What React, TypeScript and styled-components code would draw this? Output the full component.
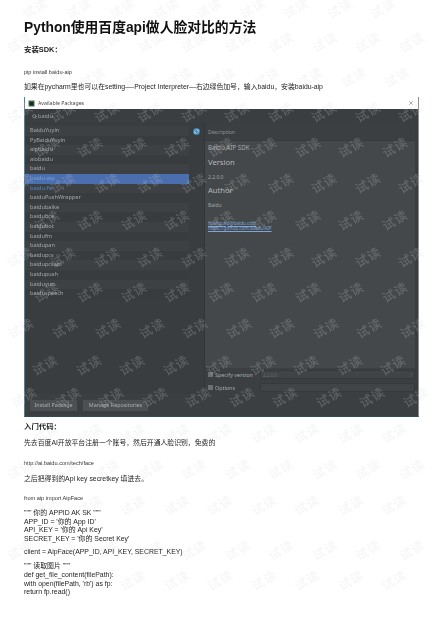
import React from "react";
import styled, { createGlobalStyle } from "styled-components";
import { Search, X, RefreshCw, ChevronDown } from "lucide-react";

const Global = createGlobalStyle`
  html, body { margin: 0; padding: 0; background: #fff; }
  body { width: 440px; height: 620px; overflow: hidden; font-family: "Liberation Sans", "Noto Sans CJK SC", sans-serif; color: #1c1c1c; }
`;

const Page = styled.div`
  position: relative;
  width: 440px;
  height: 620px;
  overflow: hidden;
  padding: 19px 21px 0 24px;
  box-sizing: border-box;
  filter: blur(0.35px);
`;
const Title = styled.h1`
  margin: 0;
  font-size: 13.8px;
  line-height: 17px;
  font-weight: 700;
  color: #111;
  white-space: nowrap;
`;
const Heading = styled.div<{ $top: number }>`
  margin-top: ${(p) => p.$top}px;
  font-size: 7.4px;
  line-height: 9px;
  font-weight: 700;
  white-space: nowrap;
`;
const Small = styled.div<{ $top: number }>`
  margin-top: ${(p) => p.$top}px;
  font-size: 5.6px;
  line-height: 7px;
  color: #333;
  white-space: nowrap;
`;
const Body = styled.div<{ $top: number }>`
  margin-top: ${(p) => p.$top}px;
  font-size: 6.85px;
  line-height: 9px;
  color: #222;
  white-space: nowrap;
`;
const Code = styled.div<{ $top: number }>`
  margin-top: ${(p) => p.$top}px;
  font-size: 6.9px;
  line-height: 8.6px;
  color: #222;
  white-space: pre;
`;

const Dialog = styled.div`
  margin-top: 6px;
  width: 395px;
  height: 320px;
  display: flex;
  flex-direction: column;
  background: #3c3f41;
  border-left: 1px solid #4f7f9f;
  border-right: 1px solid #8a8d8f;
  border-bottom: 1px solid #2f4a5c;
  box-sizing: border-box;
  font-family: "Noto Sans", "Liberation Sans", sans-serif;
`;
const TitleBar = styled.div`
  height: 12px;
  flex: none;
  display: flex;
  align-items: center;
  gap: 3px;
  padding: 0 4px 0 3px;
  background: #fff;
  color: #444;
  font-size: 5.2px;
`;
const TitleText = styled.span`
  flex: 1;
`;
const SearchBar = styled.div`
  height: 14px;
  flex: none;
  display: flex;
  align-items: center;
  gap: 1px;
  padding-left: 7px;
  background: #3b3e40;
  color: #9fa4a7;
  font-size: 5.6px;
`;
const Main = styled.div`
  flex: 1;
  min-height: 0;
  display: flex;
`;
const ListColumn = styled.div`
  width: 164px;
  flex: none;
  display: flex;
  flex-direction: column;
  padding-top: 3px;
  background: #3a3d3f;
`;
const Row = styled.div<{ $odd: boolean; $selected?: boolean; $link?: boolean }>`
  height: 9.6px;
  line-height: 9.6px;
  padding-left: 5px;
  font-size: 5.6px;
  white-space: nowrap;
  background: ${(p) => (p.$selected ? "#4b6eaf" : p.$odd ? "#3e4143" : "#393c3e")};
  color: ${(p) => (p.$link ? "#4f82c8" : p.$selected ? "#7d9fd4" : "#a3a8ab")};
`;
const SideRail = styled.div`
  width: 15px;
  flex: none;
  padding-top: 5px;
  display: flex;
  justify-content: center;
  align-items: flex-start;
  background: #3a3d3f;
  border-right: 1px solid #333638;
`;
const SyncBadge = styled.div`
  width: 7px;
  height: 7px;
  border-radius: 50%;
  background: #3f86b5;
  color: #d7e6ef;
  display: flex;
  align-items: center;
  justify-content: center;
`;
const DescColumn = styled.div`
  flex: 1;
  display: flex;
  flex-direction: column;
  min-width: 0;
  color: #a3a8ab;
  background: #3f4244;
  border-right: 3px solid #3a3d3f;
`;
const DescHeader = styled.div`
  height: 18px;
  flex: none;
  padding-left: 3px;
  display: flex;
  align-items: center;
  font-size: 5px;
  background: #3c3f41;
  border-bottom: 1px solid #383b3d;
  box-sizing: border-box;
  color: #8f9497;
`;
const DescBody = styled.div`
  flex: 1;
  padding: 1.5px 3px 0;
  background: #45484a;
  display: flex;
  flex-direction: column;
`;
const DescName = styled.div`
  font-size: 6.2px;
  line-height: 9px;
  color: #a5a9ac;
`;
const DescLabel = styled.div`
  margin-top: 6px;
  font-size: 7.6px;
  line-height: 9px;
  color: #b3b7ba;
`;
const DescValue = styled.div`
  margin-top: 7px;
  font-size: 5px;
  line-height: 6px;
  color: #a0a4a7;
`;
const LinkBox = styled.div`
  margin-top: 13px;
  font-size: 4.6px;
  line-height: 5.4px;
  color: #7fa6d8;
  text-decoration: underline;
  white-space: nowrap;
`;
const OptionRow = styled.div`
  height: 13px;
  flex: none;
  display: flex;
  align-items: center;
  gap: 2px;
  padding-left: 3px;
  font-size: 5.4px;
  background: #3c3f41;
  color: #a3a8ab;
`;
const Check = styled.span`
  width: 5px;
  height: 5px;
  flex: none;
  background: #6d7072;
`;
const OptionLabel = styled.span`
  width: 43px;
  flex: none;
`;
const Field = styled.div`
  flex: 1;
  height: 9px;
  display: flex;
  align-items: center;
  justify-content: space-between;
  background: #414446;
  border: 1px solid #36393b;
  box-sizing: border-box;
  color: #67696b;
  font-size: 4.6px;
  padding-left: 2px;
`;
const Footer = styled.div`
  height: 22px;
  flex: none;
  display: flex;
  align-items: center;
  gap: 6px;
  padding-left: 5px;
  background: #3c3f41;
`;
const Btn = styled.div<{ $w: number }>`
  width: ${(p) => p.$w}px;
  height: 11px;
  display: flex;
  align-items: center;
  justify-content: center;
  background: #4c5052;
  color: #a9adb0;
  font-size: 5.4px;
  white-space: nowrap;
`;

const Mark = styled.span`
  position: absolute;
  display: block;
  transform: translate(-50%, -50%) rotate(-30deg);
  font-family: "Noto Sans CJK SC", sans-serif;
  font-size: 12.5px;
  line-height: 14px;
  letter-spacing: 1px;
  font-weight: 500;
  color: rgba(215, 215, 215, 0.22);
  white-space: nowrap;
  pointer-events: none;
`;

const packages = [
  "BaiduYuyin", "PyBaiduYuyin", "aipbaidu", "aiobaidu", "baidu", "baidu-aip", "baidu-fsi",
  "baiduPushWrapper", "baidubaike", "baidubce", "baidubot", "baidufm", "baidupan",
  "baidupcs", "baidupcsapi", "baidupush", "baiduyun", "baiduspeech",
];

const rows: [number, number][] = [
  [8, 35], [42, 20], [77, 49], [112, 19.5], [147, 46.5], [183, 19.5], [220, 46.5], [257, 19.5],
  [292, 46.5], [328, 21], [365, 45], [397, 24], [433, 46], [469, 20], [505, 46], [550, 20], [580, 46],
];
const marks = rows
  .flatMap(([y, off]) => Array.from({ length: 10 }, (_, i) => ({ x: off + i * 43.5, y })))
  .filter((m) => m.x <= 424);

export default function App() {
  return (
    <Page>
      <Global />
      <Title>Python使用百度api做人脸对比的方法</Title>
      <Heading $top={9}>安装SDK：</Heading>
      <Small $top={15}>pip install baidu-aip</Small>
      <Body $top={6}>如果在pycharm里也可以在setting—-Project Interpreter—右边绿色加号，输入baidu，安装baidu-aip</Body>
      <Dialog>
        <TitleBar>
          <svg width="7" height="7" viewBox="0 0 7 7">
            <rect x="0.5" y="0.5" width="6" height="6" fill="#3f6f4a" />
            <rect x="1.5" y="2" width="4" height="3.5" fill="#1f2a22" />
          </svg>
          <TitleText>Available Packages</TitleText>
          <X size={6} strokeWidth={2} color="#555" />
        </TitleBar>
        <SearchBar>
          <Search size={5} strokeWidth={2.5} color="#b8bcbf" />
          <span>baidu</span>
        </SearchBar>
        <Main>
          <ListColumn>
            {packages.map((p, i) => (
              <Row key={p} $odd={i % 2 === 0} $selected={p === "baidu-aip"} $link={p === "baidu-fsi"}>
                {p}
              </Row>
            ))}
          </ListColumn>
          <SideRail>
            <SyncBadge>
              <RefreshCw size={5} strokeWidth={2.5} />
            </SyncBadge>
          </SideRail>
          <DescColumn>
            <DescHeader>Description</DescHeader>
            <DescBody>
              <DescName>Baidu AIP SDK</DescName>
              <DescLabel>Version</DescLabel>
              <DescValue>2.2.0.0</DescValue>
              <DescLabel>Author</DescLabel>
              <DescValue>Baidu</DescValue>
              <LinkBox>
                mailto:aip@baidu.com
                <br />
                https://github.com/Baidu/AIP
              </LinkBox>
            </DescBody>
            <OptionRow>
              <Check />
              <OptionLabel>Specify version</OptionLabel>
              <Field>
                2.2.0.0
                <ChevronDown size={5} />
              </Field>
            </OptionRow>
            <OptionRow>
              <Check />
              <OptionLabel>Options</OptionLabel>
              <Field />
            </OptionRow>
          </DescColumn>
        </Main>
        <Footer>
          <Btn $w={47}>Install Package</Btn>
          <Btn $w={65}>Manage Repositories</Btn>
        </Footer>
      </Dialog>
      <Heading $top={5}>入门代码：</Heading>
      <Body $top={7}>先去百度AI开放平台注册一个账号，然后开通人脸识别，免费的</Body>
      <Small $top={13}>http://ai.baidu.com/tech/face</Small>
      <Body $top={7}>之后把得到的Api key secretkey 填进去。</Body>
      <Small $top={12}>from aip import AipFace</Small>
      <Code $top={7}>{`""" 你的 APPID AK SK """\nAPP_ID = '你的 App ID'\nAPI_KEY = '你的 Api Key'\nSECRET_KEY = '你的 Secret Key'`}</Code>
      <Code $top={5}>{`client = AipFace(APP_ID, API_KEY, SECRET_KEY)`}</Code>
      <Code $top={5.5}>{`""" 读取图片 """\ndef get_file_content(filePath):\nwith open(filePath, 'rb') as fp:\nreturn fp.read()`}</Code>
      {marks.map((m, i) => (
        <Mark key={i} style={{ left: m.x, top: m.y }}>
          试读
        </Mark>
      ))}
    </Page>
  );
}
